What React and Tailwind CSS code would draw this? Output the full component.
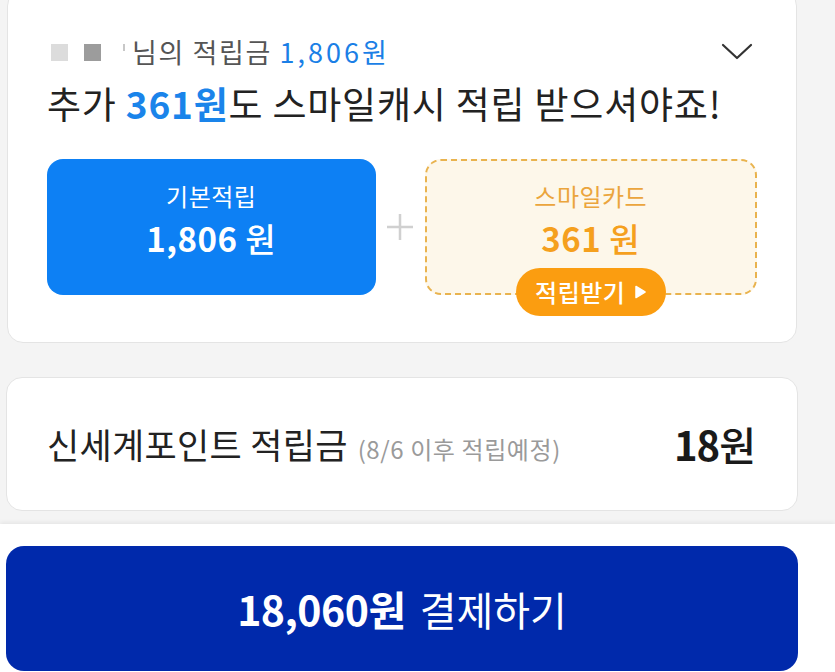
export default function App() {
  const font = { fontFamily: '"Noto Sans CJK KR", "Noto Sans", sans-serif' };
  return (
    <div
      className="w-[835px] h-[672px] overflow-hidden bg-[#f4f4f4] flex flex-col"
      style={font}
    >
      {/* Card 1 */}
      <div className="ml-[7px] w-[790px] -mt-[10px] h-[353px] bg-white border border-[#e4e4e4] rounded-[16px] px-[39px] pt-[45px] flex flex-col shrink-0">
        <div className="h-[32px] flex items-center justify-between">
          <div className="flex items-center">
            <span className="ml-[4px] w-[17px] h-[17px] bg-[#dcdcdc]" />
            <span className="ml-[16px] w-[17px] h-[17px] bg-[#9c9c9c]" />
            <span className="ml-[22px] w-[2px] h-[7px] -mt-[10px] bg-[#c8c8c8]" />
            <span className="ml-[7px] text-[27px] leading-[32px] text-[#555] tracking-[1.6px]">
              님의 적립금 <span className="text-[#1b7fe6] tracking-[3px]">1,806원</span>
            </span>
          </div>
          <svg width="32" height="18" viewBox="0 0 32 18" className="mr-[4px]">
            <polyline points="2,2 16,15 30,2" fill="none" stroke="#333" strokeWidth="2.2" strokeLinecap="round" strokeLinejoin="round" />
          </svg>
        </div>
        <div className="mt-[13px] h-[44px] flex items-center text-[37px] leading-[44px] text-[#222] tracking-[0.8px]">
          <span>
            추가 <span className="font-bold text-[#1a84ea]">361원</span>도 스마일캐시 적립 받으셔야죠!
          </span>
        </div>
        <div className="mt-[34px] flex h-[136px]">
          <div className="flex-1 bg-[#0d80f4] rounded-[16px] flex flex-col items-center pt-[22px] text-white">
            <div className="text-[24px] leading-[30px] tracking-[0.5px]">기본적립</div>
            <div className="mt-[6px] text-[33px] leading-[42px] font-bold tracking-[0.5px]">
              1,806 <span className="font-medium">원</span>
            </div>
          </div>
          <div className="w-[49px] flex items-center justify-center">
            <svg width="28" height="28" viewBox="0 0 28 28">
              <path d="M14 1v26M1 14h26" stroke="#d0d0d0" strokeWidth="2.5" />
            </svg>
          </div>
          <div className="flex-1 relative bg-[#fdf7ea] border-2 border-dashed border-[#e9b34e] rounded-[16px] flex flex-col items-center pt-[20px]">
            <div className="text-[24px] leading-[30px] tracking-[0.5px] text-[#eba53d]">스마일카드</div>
            <div className="mt-[6px] text-[33px] leading-[42px] font-bold tracking-[0.5px] text-[#f5a01e]">
              361 <span className="font-medium">원</span>
            </div>
            <div className="absolute left-1/2 -translate-x-1/2 -bottom-[23px] w-[150px] h-[48px] rounded-full bg-[#fb9d10] flex items-center justify-center gap-[10px] text-white">
              <span className="text-[24px] leading-[28px] font-medium tracking-[0.5px]">적립받기</span>
              <svg width="11" height="14" viewBox="0 0 11 14">
                <path d="M1 1.5L10 7L1 12.5Z" fill="white" stroke="white" strokeWidth="1.5" strokeLinejoin="round" />
              </svg>
            </div>
          </div>
        </div>
      </div>

      {/* Card 2 */}
      <div className="ml-[6px] w-[792px] mt-[34px] h-[134px] bg-white border border-[#e4e4e4] rounded-[16px] pl-[40px] pr-[42px] flex items-center justify-between shrink-0">
        <div className="flex items-baseline">
          <span className="text-[35px] text-[#222] tracking-[0.3px]">신세계포인트 적립금</span>
          <span className="ml-[10px] text-[24px] text-[#9a9a9a] tracking-[0.6px]">(8/6 이후 적립예정)</span>
        </div>
        <span className="text-[40px] font-bold text-[#1a1a1a] tracking-[-1px]">
          18<span className="font-medium">원</span>
        </span>
      </div>

      {/* Bottom pay bar */}
      <div className="mt-[13px] flex-1 bg-white shadow-[0_-2px_4px_rgba(0,0,0,0.06)] pt-[22px] px-[6px]">
        <div className="w-[792px] h-[125px] rounded-[18px] bg-[#0029ab] flex items-center justify-center text-white">
          <span className="text-[41px] font-bold tracking-[-0.5px]">18,060원</span>
          <span className="ml-[14px] text-[40px] tracking-[0px]">결제하기</span>
        </div>
      </div>
    </div>
  );
}
